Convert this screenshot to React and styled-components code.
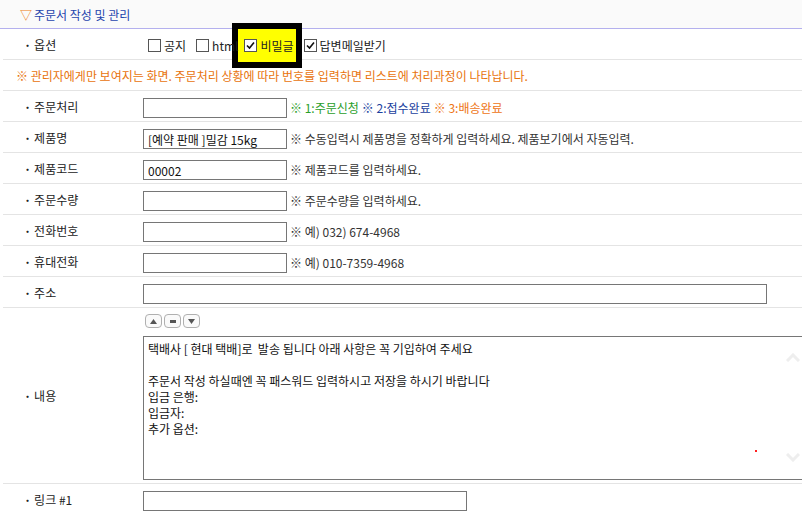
import React from "react";
import styled, { createGlobalStyle } from "styled-components";

const GlobalStyle = createGlobalStyle`
  html, body {
    margin: 0;
    padding: 0;
    background: #ffffff;
    overflow: hidden;
  }
  body {
    font-family: "Noto Sans CJK KR", "Liberation Sans", sans-serif;
    font-size: 12px;
    color: #222;
  }
`;

const Page = styled.div`
  width: 900px;
  padding-left: 3px;
`;

const Header = styled.div`
  height: 28px;
  margin-left: -3px;
  padding-left: 20px;
  display: flex;
  align-items: center;
  background: #fafafa;
  border-bottom: 1px solid #b4b0ee;
  color: #1f45ad;
  font-size: 12px;
  gap: 2px;
`;

const Triangle = styled.span`
  color: #ee7a10;
  font-size: 12px;
`;

const Row = styled.div`
  display: flex;
  min-height: ${(p) => p.$h || 30}px;
  border-bottom: 1px solid #e4e4e4;
`;

const Label = styled.div`
  width: 140px;
  flex-shrink: 0;
  display: flex;
  align-items: center;
  padding-left: 21px;
  box-sizing: border-box;
  color: #222;
  &::before {
    content: "·";
    margin-right: 3px;
    font-weight: bold;
  }
`;

const Value = styled.div`
  flex: 1;
  display: flex;
  align-items: ${(p) => (p.$top ? "flex-start" : "center")};
  flex-direction: ${(p) => (p.$column ? "column" : "row")};
  padding-top: ${(p) => (p.$top ? 6 : 3)}px;
  gap: 3px;
`;

const Input = styled.input`
  width: ${(p) => p.$w || 144}px;
  height: 20px;
  box-sizing: border-box;
  border: 1px solid #767676;
  padding: 1px 4px 0;
  font-family: inherit;
  font-size: 12px;
  color: #111;
  outline: none;
  margin: 0;
`;

const Hint = styled.span`
  color: ${(p) => p.$color || "#333"};
  white-space: nowrap;
`;

const Notice = styled.div`
  height: 30px;
  display: flex;
  align-items: center;
  padding-left: 13px;
  color: #e8730c;
  border-bottom: 1px solid #e4e4e4;
`;

const Options = styled.div`
  display: flex;
  align-items: center;
  gap: 10px;
  padding-left: 5px;
`;

const OptionItem = styled.label`
  position: relative;
  display: inline-flex;
  align-items: center;
  gap: 3px;
  white-space: nowrap;
  & > * {
    position: relative;
    z-index: 1;
  }
  ${(p) =>
    p.$highlight &&
    `
    margin-left: -4px;
    &::before {
      content: "";
      position: absolute;
      left: -12px;
      right: -8px;
      top: -14px;
      bottom: -14px;
      background: #ffff00;
      border: 6px solid #000;
      z-index: 0;
    }
  `}
`;

const Box = styled.span`
  width: 13px;
  height: 13px;
  box-sizing: border-box;
  border: 1px solid #555;
  background: #fff;
  display: inline-flex;
  align-items: center;
  justify-content: center;
`;

const Check = ({ checked }) => (
  <Box>
    {checked && (
      <svg width="9" height="9" viewBox="0 0 9 9">
        <path d="M1 4.5 L3.5 7 L8 1.5" fill="none" stroke="#111" strokeWidth="1.6" />
      </svg>
    )}
  </Box>
);

const ArrowButtons = styled.div`
  display: flex;
  gap: 2px;
  margin-left: 2px;
  margin-bottom: 5px;
`;

const SmallButton = styled.span`
  width: 15px;
  height: 12px;
  border: 1px solid #b0b0b0;
  border-radius: 4px;
  background: #fafafa;
  display: inline-flex;
  align-items: center;
  justify-content: center;
`;

const AreaWrap = styled.div`
  position: relative;
`;

const TextArea = styled.textarea`
  width: 680px;
  height: 144px;
  box-sizing: border-box;
  border: 1px solid #767676;
  border-right: none;
  padding: 4px 4px;
  font-family: inherit;
  font-size: 12px;
  line-height: 16px;
  color: #111;
  resize: none;
  outline: none;
  overflow: hidden;
  margin: 0;
  display: block;
`;

const ScrollMark = styled.svg`
  position: absolute;
  left: 643px;
  top: ${(p) => p.$top}px;
`;

const RedDot = styled.span`
  position: absolute;
  left: 612px;
  top: 114px;
  width: 2px;
  height: 2px;
  background: #ff2020;
`;

const content = `택배사 [ 현대 택배]로  발송 됩니다 아래 사항은 꼭 기입하여 주세요

주문서 작성 하실때엔 꼭 패스워드 입력하시고 저장을 하시기 바랍니다
입금 은행:
입금자:
추가 옵션:`;

export default function App() {
  return (
    <>
      <GlobalStyle />
      <Page>
        <Header>
          <Triangle>▽</Triangle>
          <span>주문서 작성 및 관리</span>
        </Header>

        <Row>
          <Label>옵션</Label>
          <Value>
            <Options>
              <OptionItem>
                <Check />
                <span>공지</span>
              </OptionItem>
              <OptionItem>
                <Check />
                <span>html</span>
              </OptionItem>
              <OptionItem $highlight>
                <Check checked />
                <span>비밀글</span>
              </OptionItem>
              <OptionItem>
                <Check checked />
                <span>답변메일받기</span>
              </OptionItem>
            </Options>
          </Value>
        </Row>

        <Notice>
          ※ 관리자에게만 보여지는 화면. 주문처리 상황에 따라 번호를 입력하면 리스트에 처리과정이 나타납니다.
        </Notice>

        <Row>
          <Label>주문처리</Label>
          <Value>
            <Input />
            <Hint $color="#2a9e2a">※ 1:주문신청</Hint>
            <Hint $color="#1b3f9e">※ 2:접수완료</Hint>
            <Hint $color="#ee7414">※ 3:배송완료</Hint>
          </Value>
        </Row>

        <Row>
          <Label>제품명</Label>
          <Value>
            <Input defaultValue="[예약 판매 ]밀감 15kg" />
            <Hint>※ 수동입력시 제품명을 정확하게 입력하세요. 제품보기에서 자동입력.</Hint>
          </Value>
        </Row>

        <Row>
          <Label>제품코드</Label>
          <Value>
            <Input defaultValue="00002" />
            <Hint>※ 제품코드를 입력하세요.</Hint>
          </Value>
        </Row>

        <Row>
          <Label>주문수량</Label>
          <Value>
            <Input />
            <Hint>※ 주문수량을 입력하세요.</Hint>
          </Value>
        </Row>

        <Row>
          <Label>전화번호</Label>
          <Value>
            <Input />
            <Hint>※ 예) 032) 674-4968</Hint>
          </Value>
        </Row>

        <Row>
          <Label>휴대전화</Label>
          <Value>
            <Input />
            <Hint>※ 예) 010-7359-4968</Hint>
          </Value>
        </Row>

        <Row>
          <Label>주소</Label>
          <Value>
            <Input $w={624} />
          </Value>
        </Row>

        <Row $h={175}>
          <Label>내용</Label>
          <Value $top $column>
            <ArrowButtons>
              <SmallButton>
                <svg width="7" height="5" viewBox="0 0 7 5">
                  <path d="M0 5 L3.5 0 L7 5 Z" fill="#555" />
                </svg>
              </SmallButton>
              <SmallButton>
                <svg width="6" height="3" viewBox="0 0 6 3">
                  <rect width="6" height="3" fill="#555" />
                </svg>
              </SmallButton>
              <SmallButton>
                <svg width="7" height="5" viewBox="0 0 7 5">
                  <path d="M0 0 L7 0 L3.5 5 Z" fill="#555" />
                </svg>
              </SmallButton>
            </ArrowButtons>
            <AreaWrap>
              <TextArea readOnly defaultValue={content} />
              <ScrollMark $top={17} width="14" height="9" viewBox="0 0 14 9">
                <path d="M1 8 L7 2 L13 8" fill="none" stroke="#eeeeee" strokeWidth="3" />
              </ScrollMark>
              <ScrollMark $top={117} width="14" height="9" viewBox="0 0 14 9">
                <path d="M1 1 L7 7 L13 1" fill="none" stroke="#eeeeee" strokeWidth="3" />
              </ScrollMark>
              <RedDot />
            </AreaWrap>
          </Value>
        </Row>

        <Row>
          <Label>링크 #1</Label>
          <Value>
            <Input $w={324} />
          </Value>
        </Row>
      </Page>
    </>
  );
}
